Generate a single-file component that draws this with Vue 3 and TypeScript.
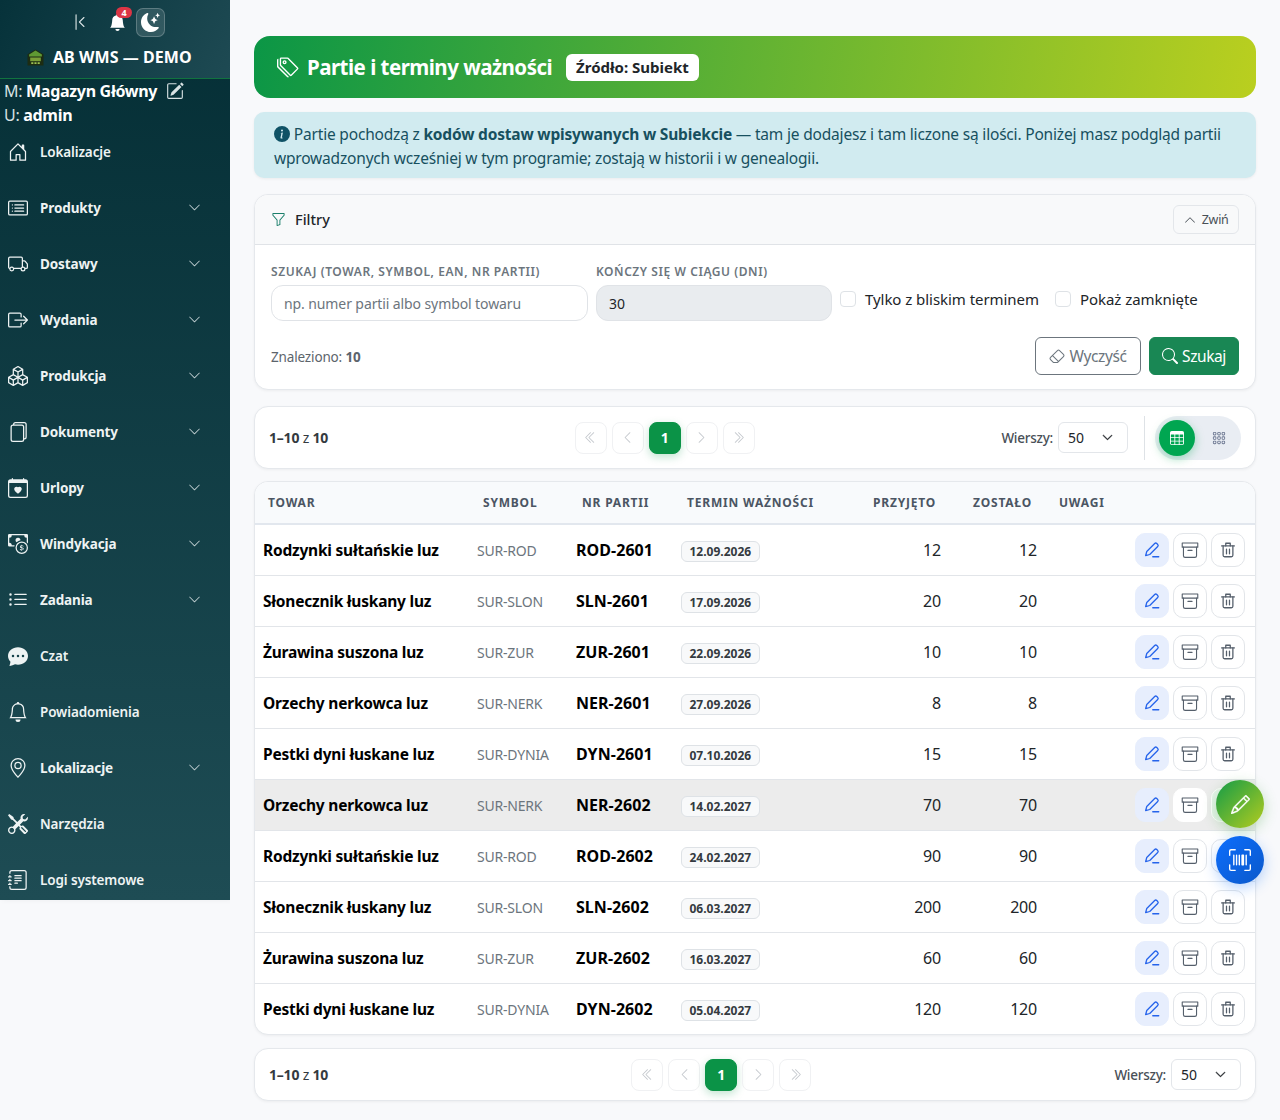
<template>
  <div class="layout">
    <aside class="sidebar">
      <header class="brand">
        <div class="brand-tools">
          <svg class="ic collapse" viewBox="0 0 16 16"><path :d="icons.collapse" /></svg>
          <span class="bell">
            <svg class="ic" viewBox="0 0 16 16"><path :d="icons.bellFill" /></svg>
            <span class="bell-badge">4</span>
          </span>
          <span class="theme-btn">
            <svg class="ic" viewBox="0 0 16 16"><path :d="icons.moon" /></svg>
          </span>
        </div>
        <div class="brand-name">
          <svg class="logo" viewBox="0 0 16 16">
            <path d="M8 .5 15.500 5v10.500H.5V5z" fill="#1d2c12" />
            <path d="M8 1.500 14 5.200V7H2V5.200z" fill="#5f9a33" />
            <path d="M3 8h10v3.500H3z" fill="#7a9f38" />
            <path d="M4 12.500h2v1.500H4zM7 12.500h2v1.500H7zM10 12.500h2v1.500h-2z" fill="#9cc052" />
          </svg>
          <span>AB WMS — DEMO</span>
        </div>
      </header>
      <div class="user-info">
        <div>M: <b>Magazyn Główny</b><svg class="ic edit" viewBox="0 0 16 16"><path :d="icons.pencilSquare" /></svg></div>
        <div>U: <b>admin</b></div>
      </div>
      <nav class="nav">
        <a v-for="item in navItems" :key="item.label + item.icon" class="nav-item" :class="{ strong: item.sub }">
          <svg class="ic nav-icon" viewBox="0 0 16 16"><path :d="icons[item.icon]" /></svg>
          <span class="nav-label">{{ item.label }}</span>
          <svg v-if="item.sub" class="ic nav-caret" viewBox="0 0 16 16"><path :d="icons.chevronDown" /></svg>
        </a>
      </nav>
    </aside>

    <main class="main">
      <section class="hero">
        <svg class="ic hero-icon" viewBox="0 0 16 16"><path :d="icons.tags" /></svg>
        <h1>Partie i terminy ważności</h1>
        <span class="hero-badge">Źródło: Subiekt</span>
      </section>

      <section class="info">
        <svg class="ic info-icon" viewBox="0 0 16 16"><path :d="icons.info" /></svg>
        Partie pochodzą z <b>kodów dostaw wpisywanych w Subiekcie</b> — tam je dodajesz i tam liczone są ilości. Poniżej masz podgląd partii wprowadzonych wcześniej w tym programie; zostają w historii i w genealogii.
      </section>

      <section class="card filters">
        <div class="filters-head">
          <svg class="ic funnel" viewBox="0 0 16 16"><path :d="icons.funnel" /></svg>
          <span class="filters-title">Filtry</span>
          <button class="collapse-btn">
            <svg class="ic" viewBox="0 0 16 16"><path :d="icons.chevronUp" /></svg>
            Zwiń
          </button>
        </div>
        <div class="filters-body">
          <div class="filters-row">
            <label class="field search-field">
              <span class="field-label">Szukaj (towar, symbol, EAN, nr partii)</span>
              <input class="input" placeholder="np. numer partii albo symbol towaru" />
            </label>
            <label class="field days-field">
              <span class="field-label">Kończy się w ciągu (dni)</span>
              <input class="input disabled" value="30" />
            </label>
            <label class="check"><span class="box"></span>Tylko z bliskim terminem</label>
            <label class="check"><span class="box"></span>Pokaż zamknięte</label>
          </div>
          <div class="filters-foot">
            <span class="found">Znaleziono: <b>10</b></span>
            <div class="foot-btns">
              <button class="btn btn-clear">
                <svg class="ic" viewBox="0 0 16 16"><path :d="icons.eraser" /></svg>
                Wyczyść
              </button>
              <button class="btn btn-search">
                <svg class="ic" viewBox="0 0 16 16"><path :d="icons.search" /></svg>
                Szukaj
              </button>
            </div>
          </div>
        </div>
      </section>

      <section class="card pager top">
        <span class="range"><b>1–10</b> z <b>10</b></span>
        <div class="pages">
          <span v-for="p in pageBtns" :key="p.key" class="page" :class="{ active: p.active }">
            <template v-if="p.active">1</template>
            <svg v-else class="ic" viewBox="0 0 16 16"><path :d="icons[p.key]" /></svg>
          </span>
        </div>
        <div class="pager-right">
          <span class="rows-label">Wierszy:</span>
          <span class="rows-select">50<svg class="ic" viewBox="0 0 16 16"><path :d="icons.chevronDown" /></svg></span>
          <span class="divider"></span>
          <span class="view-toggle">
            <span class="view-btn on"><svg class="ic" viewBox="0 0 16 16"><path :d="icons.table" /></svg></span>
            <span class="view-btn"><svg class="ic" viewBox="0 0 16 16"><path :d="icons.grid" /></svg></span>
          </span>
        </div>
      </section>

      <section class="card table-card">
        <table>
          <colgroup>
            <col style="width: 214px" />
            <col style="width: 99px" />
            <col style="width: 105px" />
            <col style="width: 186px" />
            <col style="width: 90px" />
            <col style="width: 96px" />
            <col style="width: 85px" />
            <col />
          </colgroup>
          <thead>
            <tr>
              <th>Towar</th>
              <th>Symbol</th>
              <th>Nr partii</th>
              <th>Termin ważności</th>
              <th class="num">Przyjęto</th>
              <th class="num">Zostało</th>
              <th>Uwagi</th>
              <th></th>
            </tr>
          </thead>
          <tbody>
            <tr v-for="(row, i) in rows" :key="row.batch" :class="{ hovered: i === 5 }">
              <td class="name">{{ row.name }}</td>
              <td class="symbol">{{ row.symbol }}</td>
              <td class="batch">{{ row.batch }}</td>
              <td><span class="date">{{ row.date }}</span></td>
              <td class="num">{{ row.qty }}</td>
              <td class="num">{{ row.qty }}</td>
              <td></td>
              <td class="actions-cell">
                <div class="actions">
                  <button class="act edit-act">
                    <svg class="stroke" viewBox="0 0 24 24">
                      <path d="M3.500 19.500 5 14 15.600 3.400a2 2 0 0 1 2.800 0l1.200 1.200a2 2 0 0 1 0 2.800L9 18z" />
                      <path d="M13 21h8" />
                    </svg>
                  </button>
                  <button class="act">
                    <svg class="stroke thin" viewBox="1 1 22 22">
                      <path d="M2.500 3.500h19v5h-19z" />
                      <path d="M4 8.500V19a2 2 0 0 0 2 2h12a2 2 0 0 0 2-2V8.500" />
                      <path d="M9.500 12.500h5" />
                    </svg>
                  </button>
                  <button class="act trash-act">
                    <svg class="stroke" viewBox="0 0 24 24">
                      <path d="M3.500 6.500h17" />
                      <path d="M9 6.500V3h6v3.500" />
                      <path d="M5.500 6.500V19a2 2 0 0 0 2 2h9a2 2 0 0 0 2-2V6.500" />
                      <path d="M10 11v6M14 11v6" />
                    </svg>
                  </button>
                </div>
              </td>
            </tr>
          </tbody>
        </table>
      </section>

      <section class="card pager bottom">
        <span class="range"><b>1–10</b> z <b>10</b></span>
        <div class="pages">
          <span v-for="p in pageBtns" :key="p.key" class="page" :class="{ active: p.active }">
            <template v-if="p.active">1</template>
            <svg v-else class="ic" viewBox="0 0 16 16"><path :d="icons[p.key]" /></svg>
          </span>
        </div>
        <div class="pager-right">
          <span class="rows-label">Wierszy:</span>
          <span class="rows-select">50<svg class="ic" viewBox="0 0 16 16"><path :d="icons.chevronDown" /></svg></span>
        </div>
      </section>
    </main>

    <button class="fab fab-green"><svg class="ic" viewBox="0 0 16 16"><path :d="icons.pencil" /></svg></button>
    <button class="fab fab-blue"><svg class="ic" viewBox="0 0 16 16"><path :d="icons.upc" /></svg></button>
  </div>
</template>

<script setup lang="ts">
const icons: Record<string, string> = {
  collapse: 'M11.854 3.646a.5.5 0 0 1 0 .708L8.207 8l3.647 3.646a.5.5 0 0 1-.708.708l-4-4a.5.5 0 0 1 0-.708l4-4a.5.5 0 0 1 .708 0zM4.5 1a.5.5 0 0 0-.5.5v13a.5.5 0 0 0 1 0v-13a.5.5 0 0 0-.5-.5z',
  bellFill: 'M8 16a2 2 0 0 0 2-2H6a2 2 0 0 0 2 2zm.995-14.901a1 1 0 1 0-1.99 0A5.002 5.002 0 0 0 3 6c0 1.098-.5 6-2 7h14c-1.5-1-2-5.902-2-7 0-2.42-1.72-4.44-4.005-4.901z',
  moon: 'M6 .278a.768.768 0 0 1 .08.858 7.208 7.208 0 0 0-.878 3.46c0 4.021 3.278 7.277 7.318 7.277.527 0 1.04-.055 1.533-.16a.787.787 0 0 1 .81.316.733.733 0 0 1-.031.893A8.349 8.349 0 0 1 8.344 16C3.734 16 0 12.286 0 7.71 0 4.266 2.114 1.312 5.124.06A.752.752 0 0 1 6 .278z M10.794 3.148a.217.217 0 0 1 .412 0l.387 1.162c.173.518.579.924 1.097 1.097l1.162.387a.217.217 0 0 1 0 .412l-1.162.387a1.734 1.734 0 0 0-1.097 1.097l-.387 1.162a.217.217 0 0 1-.412 0l-.387-1.162A1.734 1.734 0 0 0 9.31 6.593l-1.162-.387a.217.217 0 0 1 0-.412l1.162-.387a1.734 1.734 0 0 0 1.097-1.097l.387-1.162zM13.863.099a.145.145 0 0 1 .274 0l.258.774c.115.346.386.617.732.732l.774.258a.145.145 0 0 1 0 .274l-.774.258a1.156 1.156 0 0 0-.732.732l-.258.774a.145.145 0 0 1-.274 0l-.258-.774a1.156 1.156 0 0 0-.732-.732l-.774-.258a.145.145 0 0 1 0-.274l.774-.258c.346-.115.617-.386.732-.732L13.863.1z',
  pencilSquare: 'M15.502 1.94a.5.5 0 0 1 0 .706L14.459 3.69l-2-2L13.502.646a.5.5 0 0 1 .707 0l1.293 1.293zm-1.75 2.456-2-2L4.939 9.21a.5.5 0 0 0-.121.196l-.805 2.414a.25.25 0 0 0 .316.316l2.414-.805a.5.5 0 0 0 .196-.12l6.813-6.814z M1 13.5A1.5 1.5 0 0 0 2.5 15h11a1.5 1.5 0 0 0 1.5-1.5v-6a.5.5 0 0 0-1 0v6a.5.5 0 0 1-.5.5h-11a.5.5 0 0 1-.5-.5v-11a.5.5 0 0 1 .5-.5H9a.5.5 0 0 0 0-1H2.5A1.5 1.5 0 0 0 1 2.5v11z',
  chevronDown: 'M1.646 4.646a.5.5 0 0 1 .708 0L8 10.293l5.646-5.647a.5.5 0 0 1 .708.708l-6 6a.5.5 0 0 1-.708 0l-6-6a.5.5 0 0 1 0-.708z',
  chevronUp: 'M7.646 4.646a.5.5 0 0 1 .708 0l6 6a.5.5 0 0 1-.708.708L8 5.707l-5.646 5.647a.5.5 0 0 1-.708-.708l6-6z',
  first: 'M8.354 1.646a.5.5 0 0 1 0 .708L2.707 8l5.647 5.646a.5.5 0 0 1-.708.708l-6-6a.5.5 0 0 1 0-.708l6-6a.5.5 0 0 1 .708 0z M12.354 1.646a.5.5 0 0 1 0 .708L6.707 8l5.647 5.646a.5.5 0 0 1-.708.708l-6-6a.5.5 0 0 1 0-.708l6-6a.5.5 0 0 1 .708 0z',
  prev: 'M11.354 1.646a.5.5 0 0 1 0 .708L5.707 8l5.647 5.646a.5.5 0 0 1-.708.708l-6-6a.5.5 0 0 1 0-.708l6-6a.5.5 0 0 1 .708 0z',
  next: 'M4.646 1.646a.5.5 0 0 1 .708 0l6 6a.5.5 0 0 1 0 .708l-6 6a.5.5 0 0 1-.708-.708L10.293 8 4.646 2.354a.5.5 0 0 1 0-.708z',
  last: 'M3.646 1.646a.5.5 0 0 1 .708 0l6 6a.5.5 0 0 1 0 .708l-6 6a.5.5 0 0 1-.708-.708L9.293 8 3.646 2.354a.5.5 0 0 1 0-.708z M7.646 1.646a.5.5 0 0 1 .708 0l6 6a.5.5 0 0 1 0 .708l-6 6a.5.5 0 0 1-.708-.708L13.293 8 7.646 2.354a.5.5 0 0 1 0-.708z',
  house: 'M8.354 1.146a.5.5 0 0 0-.708 0l-6 6A.5.5 0 0 0 1.5 7.5v7a.5.5 0 0 0 .5.5h4.5a.5.5 0 0 0 .5-.5v-4h2v4a.5.5 0 0 0 .5.5H14a.5.5 0 0 0 .5-.5v-7a.5.5 0 0 0-.146-.354L13 5.793V2.5a.5.5 0 0 0-.5-.5h-1a.5.5 0 0 0-.5.5v1.293L8.354 1.146zM2.5 14V7.707l5.5-5.5 5.5 5.5V14H10v-4a.5.5 0 0 0-.5-.5h-3a.5.5 0 0 0-.5.5v4H2.5z',
  cardList: 'M14.5 3a.5.5 0 0 1 .5.5v9a.5.5 0 0 1-.5.5h-13a.5.5 0 0 1-.5-.5v-9a.5.5 0 0 1 .5-.5h13zm-13-1A1.5 1.5 0 0 0 0 3.5v9A1.5 1.5 0 0 0 1.5 14h13a1.5 1.5 0 0 0 1.5-1.5v-9A1.5 1.5 0 0 0 14.5 2h-13z M5 8a.5.5 0 0 1 .5-.5h7a.5.5 0 0 1 0 1h-7A.5.5 0 0 1 5 8zm0-2.5a.5.5 0 0 1 .5-.5h7a.5.5 0 0 1 0 1h-7a.5.5 0 0 1-.5-.5zm0 5a.5.5 0 0 1 .5-.5h7a.5.5 0 0 1 0 1h-7a.5.5 0 0 1-.5-.5zm-1-5a.5.5 0 1 1-1 0 .5.5 0 0 1 1 0zM4 8a.5.5 0 1 1-1 0 .5.5 0 0 1 1 0zm0 2.5a.5.5 0 1 1-1 0 .5.5 0 0 1 1 0z',
  truck: 'M0 3.5A1.5 1.5 0 0 1 1.5 2h9A1.5 1.5 0 0 1 12 3.5V5h1.02a1.5 1.5 0 0 1 1.17.563l1.481 1.85a1.5 1.5 0 0 1 .329.938V10.5a1.5 1.5 0 0 1-1.5 1.5H14a2 2 0 1 1-4 0H5a2 2 0 1 1-3.998-.085A1.5 1.5 0 0 1 0 10.5v-7zm1.294 7.456A1.999 1.999 0 0 1 4.732 11h5.536a2.01 2.01 0 0 1 .732-.732V3.5a.5.5 0 0 0-.5-.5h-9a.5.5 0 0 0-.5.5v7a.5.5 0 0 0 .294.456zM12 10a2 2 0 0 1 1.732 1h.768a.5.5 0 0 0 .5-.5V8.35a.5.5 0 0 0-.11-.312l-1.48-1.85A.5.5 0 0 0 13.02 6H12v4zm-9 1a1 1 0 1 0 0 2 1 1 0 0 0 0-2zm9 0a1 1 0 1 0 0 2 1 1 0 0 0 0-2z',
  boxArrow: 'M10 12.5a.5.5 0 0 1-.5.5h-8a.5.5 0 0 1-.5-.5v-9a.5.5 0 0 1 .5-.5h8a.5.5 0 0 1 .5.5v2a.5.5 0 0 0 1 0v-2A1.5 1.5 0 0 0 9.5 2h-8A1.5 1.5 0 0 0 0 3.5v9A1.5 1.5 0 0 0 1.5 14h8a1.5 1.5 0 0 0 1.5-1.5v-2a.5.5 0 0 0-1 0v2z M15.854 8.354a.5.5 0 0 0 0-.708l-3-3a.5.5 0 0 0-.708.708L14.293 7.5H5.5a.5.5 0 0 0 0 1h8.793l-2.147 2.146a.5.5 0 0 0 .708.708l3-3z',
  boxes: 'M7.752.066a.5.5 0 0 1 .496 0l3.75 2.143a.5.5 0 0 1 .252.434v3.995l3.498 2A.5.5 0 0 1 16 9.07v4.286a.5.5 0 0 1-.252.434l-3.75 2.143a.5.5 0 0 1-.496 0l-3.502-2-3.502 2.001a.5.5 0 0 1-.496 0l-3.75-2.143A.5.5 0 0 1 0 13.357V9.071a.5.5 0 0 1 .252-.434L3.75 6.638V2.643a.5.5 0 0 1 .252-.434L7.752.066ZM4.25 7.504 1.508 9.071l2.742 1.567 2.742-1.567L4.25 7.504ZM7.5 9.933l-2.75 1.571v3.134l2.75-1.571V9.933Zm1 3.134 2.75 1.571v-3.134L8.5 9.933v3.134Zm.508-3.996 2.742 1.567 2.742-1.567-2.742-1.567-2.742 1.567Zm2.242-2.433V3.504L8.5 5.076V8.21l2.75-1.572ZM7.5 8.21V5.076L4.75 3.504v3.134L7.5 8.21ZM5.258 2.643 8 4.21l2.742-1.567L8 1.076 5.258 2.643ZM15 9.933l-2.75 1.571v3.134L15 13.067V9.933ZM3.75 14.638v-3.134L1 9.933v3.134l2.75 1.571Z',
  files: 'M13 0H6a2 2 0 0 0-2 2 2 2 0 0 0-2 2v10a2 2 0 0 0 2 2h7a2 2 0 0 0 2-2 2 2 0 0 0 2-2V2a2 2 0 0 0-2-2zm0 13V4a2 2 0 0 0-2-2H5a1 1 0 0 1 1-1h7a1 1 0 0 1 1 1v10a1 1 0 0 1-1 1zM3 4a1 1 0 0 1 1-1h7a1 1 0 0 1 1 1v10a1 1 0 0 1-1 1H4a1 1 0 0 1-1-1V4z',
  calendar: 'M4 .5a.5.5 0 0 0-1 0V1H2a2 2 0 0 0-2 2v11a2 2 0 0 0 2 2h12a2 2 0 0 0 2-2V3a2 2 0 0 0-2-2h-1V.5a.5.5 0 0 0-1 0V1H4V.5ZM1 14V4h14v10a1 1 0 0 1-1 1H2a1 1 0 0 1-1-1Zm7-6.507c1.664-1.711 5.825 1.283 0 5.132-5.825-3.85-1.664-6.843 0-5.132Z',
  cash: 'M11 15a4 4 0 1 0 0-8 4 4 0 0 0 0 8zm5-4a5 5 0 1 1-10 0 5 5 0 0 1 10 0z M9.438 11.944c.047.596.518 1.06 1.363 1.116v.44h.375v-.443c.875-.061 1.386-.529 1.386-1.207 0-.618-.39-.936-1.09-1.1l-.296-.07v-1.2c.376.043.614.248.671.532h.658c-.047-.575-.54-1.024-1.329-1.073V8.5h-.375v.45c-.747.073-1.255.522-1.255 1.158 0 .562.378.92 1.007 1.066l.248.061v1.272c-.384-.058-.639-.27-.696-.563h-.668zm1.36-1.354c-.369-.085-.569-.26-.569-.522 0-.294.216-.514.572-.578v1.1h-.003zm.432.746c.449.104.655.272.655.569 0 .339-.257.571-.709.635v-1.195l.054.012z M1 0a1 1 0 0 0-1 1v8a1 1 0 0 0 1 1h4.083c.058-.344.145-.678.258-1H3a2 2 0 0 0-2-2V3a2 2 0 0 0 2-2h10a2 2 0 0 0 2 2v3.528c.38.34.717.728 1 1.154V1a1 1 0 0 0-1-1H1z M9.998 5.083 10 5a2 2 0 1 0-3.132 1.65 5.982 5.982 0 0 1 3.13-1.567z',
  list: 'M5 11.5a.5.5 0 0 1 .5-.5h9a.5.5 0 0 1 0 1h-9a.5.5 0 0 1-.5-.5zm0-4a.5.5 0 0 1 .5-.5h9a.5.5 0 0 1 0 1h-9a.5.5 0 0 1-.5-.5zm0-4a.5.5 0 0 1 .5-.5h9a.5.5 0 0 1 0 1h-9a.5.5 0 0 1-.5-.5zm-3 1a1 1 0 1 0 0-2 1 1 0 0 0 0 2zm0 4a1 1 0 1 0 0-2 1 1 0 0 0 0 2zm0 4a1 1 0 1 0 0-2 1 1 0 0 0 0 2z',
  chat: 'M16 8c0 3.866-3.582 7-8 7a9.06 9.06 0 0 1-2.347-.306c-.584.296-1.925.864-4.181 1.234-.2.032-.352-.176-.273-.362.354-.836.674-1.95.77-2.966C.744 11.37 0 9.76 0 8c0-3.866 3.582-7 8-7s8 3.134 8 7zM5 8a1 1 0 1 0-2 0 1 1 0 0 0 2 0zm4 0a1 1 0 1 0-2 0 1 1 0 0 0 2 0zm3 1a1 1 0 1 0 0-2 1 1 0 0 0 0 2z',
  bell: 'M8 16a2 2 0 0 0 2-2H6a2 2 0 0 0 2 2zM8 1.918l-.797.161A4.002 4.002 0 0 0 4 6c0 .628-.134 2.197-.459 3.742-.16.767-.376 1.566-.663 2.258h10.244c-.287-.692-.502-1.49-.663-2.258C12.134 8.197 12 6.628 12 6a4.002 4.002 0 0 0-3.203-3.92L8 1.917zM14.22 12c.223.447.481.801.78 1H1c.299-.199.557-.553.78-1C2.68 10.2 3 6.88 3 6c0-2.42 1.72-4.44 4.005-4.901a1 1 0 1 1 1.99 0A5.002 5.002 0 0 1 13 6c0 .88.32 4.2 1.22 6z',
  geo: 'M12.166 8.94c-.524 1.062-1.234 2.12-1.96 3.07A31.493 31.493 0 0 1 8 14.58a31.481 31.481 0 0 1-2.206-2.57c-.726-.95-1.436-2.008-1.96-3.07C3.304 7.867 3 6.862 3 6a5 5 0 0 1 10 0c0 .862-.305 1.867-.834 2.94zM8 16s6-5.686 6-10A6 6 0 0 0 2 6c0 4.314 6 10 6 10z M8 8a2 2 0 1 1 0-4 2 2 0 0 1 0 4zm0 1a3 3 0 1 0 0-6 3 3 0 0 0 0 6z',
  tools: 'M1 0 0 1l2.2 3.081a1 1 0 0 0 .815.419h.07a1 1 0 0 1 .708.293l2.675 2.675-2.617 2.654A3.003 3.003 0 0 0 0 13a3 3 0 1 0 5.878-.851l2.654-2.617.968.968-.305.914a1 1 0 0 0 .242 1.023l3.27 3.27a.997.997 0 0 0 1.414 0l1.586-1.586a.997.997 0 0 0 0-1.414l-3.27-3.27a1 1 0 0 0-1.023-.242L10.5 9.5l-.96-.96 2.68-2.643A3.005 3.005 0 0 0 16 3c0-.269-.035-.53-.102-.777l-2.14 2.141L12 4l-.364-1.757L13.777.102a3 3 0 0 0-3.675 3.68L7.462 6.46 4.793 3.793a1 1 0 0 1-.293-.707v-.071a1 1 0 0 0-.419-.814L1 0Zm9.646 10.646a.5.5 0 0 1 .708 0l2.914 2.915a.5.5 0 0 1-.707.707l-2.915-2.914a.5.5 0 0 1 0-.708ZM3 11l.471.242.529.026.287.445.445.287.026.529L5 13l-.242.471-.026.529-.445.287-.287.445-.529.026L3 15l-.471-.242L2 14.732l-.287-.445L1.268 14l-.026-.529L1 13l.242-.471.026-.529.445-.287.287-.445.529-.026L3 11Z',
  journal: 'M5 10.5a.5.5 0 0 1 .5-.5h2a.5.5 0 0 1 0 1h-2a.5.5 0 0 1-.5-.5zm0-2a.5.5 0 0 1 .5-.5h5a.5.5 0 0 1 0 1h-5a.5.5 0 0 1-.5-.5zm0-2a.5.5 0 0 1 .5-.5h5a.5.5 0 0 1 0 1h-5a.5.5 0 0 1-.5-.5zm0-2a.5.5 0 0 1 .5-.5h5a.5.5 0 0 1 0 1h-5a.5.5 0 0 1-.5-.5z M3 0h10a2 2 0 0 1 2 2v12a2 2 0 0 1-2 2H3a2 2 0 0 1-2-2v-1h1v1a1 1 0 0 0 1 1h10a1 1 0 0 0 1-1V2a1 1 0 0 0-1-1H3a1 1 0 0 0-1 1v1H1V2a2 2 0 0 1 2-2z M1 5v-.5a.5.5 0 0 1 1 0V5h.5a.5.5 0 0 1 0 1h-2a.5.5 0 0 1 0-1H1zm0 3v-.5a.5.5 0 0 1 1 0V8h.5a.5.5 0 0 1 0 1h-2a.5.5 0 0 1 0-1H1zm0 3v-.5a.5.5 0 0 1 1 0v.5h.5a.5.5 0 0 1 0 1h-2a.5.5 0 0 1 0-1H1z',
  tags: 'M3 2v4.586l7 7L14.586 9l-7-7H3zM2 2a1 1 0 0 1 1-1h4.586a1 1 0 0 1 .707.293l7 7a1 1 0 0 1 0 1.414l-4.586 4.586a1 1 0 0 1-1.414 0l-7-7A1 1 0 0 1 2 6.586V2z M5.5 5a.5.5 0 1 1 0-1 .5.5 0 0 1 0 1zm0 1a1.5 1.5 0 1 0 0-3 1.5 1.5 0 0 0 0 3zM1 7.086a1 1 0 0 0 .293.707L8.75 15.25l-.043.043a1 1 0 0 1-1.414 0l-7-7A1 1 0 0 1 0 7.586V3a1 1 0 0 1 1-1v5.086z',
  info: 'M8 16A8 8 0 1 0 8 0a8 8 0 0 0 0 16zm.93-9.412-1 4.705c-.07.34.029.533.304.533.194 0 .487-.07.686-.246l-.088.416c-.287.346-.92.598-1.465.598-.703 0-1.002-.422-.808-1.319l.738-3.468c.064-.293.006-.399-.287-.47l-.451-.081.082-.381 2.29-.287zM8 5.5a1 1 0 1 1 0-2 1 1 0 0 1 0 2z',
  funnel: 'M1.5 1.5A.5.5 0 0 1 2 1h12a.5.5 0 0 1 .5.5v2a.5.5 0 0 1-.128.334L10 8.692V13.5a.5.5 0 0 1-.342.474l-3 1A.5.5 0 0 1 6 14.5V8.692L1.628 3.834A.5.5 0 0 1 1.5 3.5v-2zm1 .5v1.308l4.372 4.858A.5.5 0 0 1 7 8.5v5.306l2-.666V8.5a.5.5 0 0 1 .128-.334L13.5 3.308V2h-11z',
  eraser: 'M8.086 2.207a2 2 0 0 1 2.828 0l3.879 3.879a2 2 0 0 1 0 2.828l-5.5 5.5A2 2 0 0 1 7.879 15H5.12a2 2 0 0 1-1.414-.586l-2.5-2.5a2 2 0 0 1 0-2.828l6.879-6.879zm2.121.707a1 1 0 0 0-1.414 0L4.16 7.547l5.293 5.293 4.633-4.633a1 1 0 0 0 0-1.414l-3.879-3.879zM8.746 13.547 3.453 8.254 1.914 9.793a1 1 0 0 0 0 1.414l2.5 2.5a1 1 0 0 0 .707.293H7.88a1 1 0 0 0 .707-.293l.16-.16z',
  search: 'M11.742 10.344a6.5 6.5 0 1 0-1.397 1.398h-.001c.03.04.062.078.098.115l3.85 3.85a1 1 0 0 0 1.415-1.414l-3.85-3.85a1.007 1.007 0 0 0-.115-.1zM12 6.5a5.5 5.5 0 1 1-11 0 5.5 5.5 0 0 1 11 0z',
  table: 'M0 2a2 2 0 0 1 2-2h12a2 2 0 0 1 2 2v12a2 2 0 0 1-2 2H2a2 2 0 0 1-2-2V2zm15 2h-4v3h4V4zm0 4h-4v3h4V8zm0 4h-4v3h3a1 1 0 0 0 1-1v-2zm-5 3v-3H6v3h4zm-5 0v-3H1v2a1 1 0 0 0 1 1h3zm-4-4h4V8H1v3zm0-4h4V4H1v3zm5-3v3h4V4H6zm4 4H6v3h4V8z',
  grid: 'M1 2.5A1.5 1.5 0 0 1 2.5 1h1A1.5 1.5 0 0 1 5 2.5v1A1.5 1.5 0 0 1 3.5 5h-1A1.5 1.5 0 0 1 1 3.5v-1zM2.5 2a.5.5 0 0 0-.5.5v1a.5.5 0 0 0 .5.5h1a.5.5 0 0 0 .5-.5v-1a.5.5 0 0 0-.5-.5h-1zm3.5.5A1.5 1.5 0 0 1 7.500 1h1A1.500 1.500 0 0 1 10 2.500v1A1.500 1.500 0 0 1 8.500 5h-1A1.500 1.500 0 0 1 6 3.500v-1zM7.500 2a.5.5 0 0 0-.5.5v1a.5.5 0 0 0 .5.5h1a.5.5 0 0 0 .5-.5v-1a.5.5 0 0 0-.5-.5h-1zM11 2.500A1.500 1.500 0 0 1 12.500 1h1A1.500 1.500 0 0 1 15 2.500v1A1.500 1.500 0 0 1 13.500 5h-1A1.500 1.500 0 0 1 11 3.500v-1zm1.500-.5a.5.5 0 0 0-.5.5v1a.5.5 0 0 0 .5.5h1a.5.5 0 0 0 .5-.5v-1a.5.5 0 0 0-.5-.5h-1zM1 7.500A1.500 1.500 0 0 1 2.500 6h1A1.500 1.500 0 0 1 5 7.500v1A1.500 1.500 0 0 1 3.500 10h-1A1.500 1.500 0 0 1 1 8.500v-1zM2.500 7a.5.5 0 0 0-.5.5v1a.5.5 0 0 0 .5.5h1a.5.5 0 0 0 .5-.5v-1a.5.5 0 0 0-.5-.5h-1zM6 7.500A1.500 1.500 0 0 1 7.500 6h1A1.500 1.500 0 0 1 10 7.500v1A1.500 1.500 0 0 1 8.500 10h-1A1.500 1.500 0 0 1 6 8.500v-1zM7.500 7a.5.5 0 0 0-.5.5v1a.5.5 0 0 0 .5.5h1a.5.5 0 0 0 .5-.5v-1a.5.5 0 0 0-.5-.5h-1zM11 7.500A1.500 1.500 0 0 1 12.500 6h1A1.500 1.500 0 0 1 15 7.500v1A1.500 1.500 0 0 1 13.500 10h-1A1.500 1.500 0 0 1 11 8.500v-1zm1.500-.5a.5.5 0 0 0-.5.5v1a.5.5 0 0 0 .5.5h1a.5.5 0 0 0 .5-.5v-1a.5.5 0 0 0-.5-.5h-1zM1 12.500A1.500 1.500 0 0 1 2.500 11h1A1.500 1.500 0 0 1 5 12.500v1A1.500 1.500 0 0 1 3.500 15h-1A1.500 1.500 0 0 1 1 13.500v-1zm1.500-.5a.5.5 0 0 0-.5.5v1a.5.5 0 0 0 .5.5h1a.5.5 0 0 0 .5-.5v-1a.5.5 0 0 0-.5-.5h-1zM6 12.500A1.500 1.500 0 0 1 7.500 11h1A1.500 1.500 0 0 1 10 12.500v1A1.500 1.500 0 0 1 8.500 15h-1A1.500 1.500 0 0 1 6 13.500v-1zm1.500-.5a.5.5 0 0 0-.5.5v1a.5.5 0 0 0 .5.5h1a.5.5 0 0 0 .5-.5v-1a.5.5 0 0 0-.5-.5h-1zM11 12.500A1.500 1.500 0 0 1 12.500 11h1A1.500 1.500 0 0 1 15 12.500v1A1.500 1.500 0 0 1 13.500 15h-1A1.500 1.500 0 0 1 11 13.500v-1zm1.500-.5a.5.5 0 0 0-.5.5v1a.5.5 0 0 0 .5.5h1a.5.5 0 0 0 .5-.5v-1a.5.5 0 0 0-.5-.5h-1z',
  pencil: 'M12.146.146a.5.5 0 0 1 .708 0l3 3a.5.5 0 0 1 0 .708l-10 10a.5.5 0 0 1-.168.11l-5 2a.5.5 0 0 1-.65-.65l2-5a.5.5 0 0 1 .11-.168l10-10zM11.207 2.500 13.500 4.793 14.793 3.500 12.500 1.207 11.207 2.500zm1.586 3L10.500 3.207 4 9.707V10h.5a.5.5 0 0 1 .5.5v.5h.5a.5.5 0 0 1 .5.5v.5h.293l6.500-6.500zm-9.761 5.175-.106.106-1.528 3.821 3.821-1.528.106-.106A.5.5 0 0 1 5 12.500V12h-.5a.5.5 0 0 1-.5-.5V11h-.5a.5.5 0 0 1-.468-.325z',
  upc: 'M1.5 1a.5.5 0 0 0-.5.5v3a.5.5 0 0 1-1 0v-3A1.5 1.5 0 0 1 1.5 0h3a.5.5 0 0 1 0 1h-3zM11 .5a.5.5 0 0 1 .5-.5h3A1.5 1.5 0 0 1 16 1.500v3a.5.5 0 0 1-1 0v-3a.5.5 0 0 0-.5-.5h-3a.5.5 0 0 1-.5-.5zM.5 11a.5.5 0 0 1 .5.5v3a.5.5 0 0 0 .5.5h3a.5.5 0 0 1 0 1h-3A1.500 1.500 0 0 1 0 14.500v-3a.5.5 0 0 1 .5-.5zm15 0a.5.5 0 0 1 .5.5v3a1.500 1.500 0 0 1-1.500 1.500h-3a.5.5 0 0 1 0-1h3a.5.5 0 0 0 .5-.5v-3a.5.5 0 0 1 .5-.5zM3 4.500a.5.5 0 0 1 1 0v7a.5.5 0 0 1-1 0v-7zm2 0a.5.5 0 0 1 1 0v7a.5.5 0 0 1-1 0v-7zm2 0a.5.5 0 0 1 1 0v7a.5.5 0 0 1-1 0v-7zm2 0a.5.5 0 0 1 .5-.5h1a.5.5 0 0 1 .5.5v7a.5.5 0 0 1-.5.5h-1a.5.5 0 0 1-.5-.5v-7zm3 0a.5.5 0 0 1 1 0v7a.5.5 0 0 1-1 0v-7z',
}

const navItems = [
  { label: 'Lokalizacje', icon: 'house', sub: false },
  { label: 'Produkty', icon: 'cardList', sub: true },
  { label: 'Dostawy', icon: 'truck', sub: true },
  { label: 'Wydania', icon: 'boxArrow', sub: true },
  { label: 'Produkcja', icon: 'boxes', sub: true },
  { label: 'Dokumenty', icon: 'files', sub: true },
  { label: 'Urlopy', icon: 'calendar', sub: true },
  { label: 'Windykacja', icon: 'cash', sub: true },
  { label: 'Zadania', icon: 'list', sub: true },
  { label: 'Czat', icon: 'chat', sub: false },
  { label: 'Powiadomienia', icon: 'bell', sub: false },
  { label: 'Lokalizacje', icon: 'geo', sub: true },
  { label: 'Narzędzia', icon: 'tools', sub: false },
  { label: 'Logi systemowe', icon: 'journal', sub: false },
]

const pageBtns = [
  { key: 'first', active: false },
  { key: 'prev', active: false },
  { key: 'current', active: true },
  { key: 'next', active: false },
  { key: 'last', active: false },
]

const rows = [
  { name: 'Rodzynki sułtańskie luz', symbol: 'SUR-ROD', batch: 'ROD-2601', date: '12.09.2026', qty: 12 },
  { name: 'Słonecznik łuskany luz', symbol: 'SUR-SLON', batch: 'SLN-2601', date: '17.09.2026', qty: 20 },
  { name: 'Żurawina suszona luz', symbol: 'SUR-ZUR', batch: 'ZUR-2601', date: '22.09.2026', qty: 10 },
  { name: 'Orzechy nerkowca luz', symbol: 'SUR-NERK', batch: 'NER-2601', date: '27.09.2026', qty: 8 },
  { name: 'Pestki dyni łuskane luz', symbol: 'SUR-DYNIA', batch: 'DYN-2601', date: '07.10.2026', qty: 15 },
  { name: 'Orzechy nerkowca luz', symbol: 'SUR-NERK', batch: 'NER-2602', date: '14.02.2027', qty: 70 },
  { name: 'Rodzynki sułtańskie luz', symbol: 'SUR-ROD', batch: 'ROD-2602', date: '24.02.2027', qty: 90 },
  { name: 'Słonecznik łuskany luz', symbol: 'SUR-SLON', batch: 'SLN-2602', date: '06.03.2027', qty: 200 },
  { name: 'Żurawina suszona luz', symbol: 'SUR-ZUR', batch: 'ZUR-2602', date: '16.03.2027', qty: 60 },
  { name: 'Pestki dyni łuskane luz', symbol: 'SUR-DYNIA', batch: 'DYN-2602', date: '05.04.2027', qty: 120 },
]
</script>

<style>
body {
  margin: 0;
  background: #f8f9fb;
}
</style>

<style scoped>
.layout {
  display: flex;
  align-items: flex-start;
  font-family: "Noto Sans", "Open Sans", sans-serif;
  color: #212529;
  font-size: 15px;
}

.ic {
  width: 1em;
  height: 1em;
  fill: currentColor;
  flex: none;
}

/* sidebar */
.sidebar {
  width: 230px;
  height: 900px;
  flex: none;
  background: linear-gradient(180deg, #042e35 0%, #1e4c54 100%);
  box-shadow: 2px 0 6px rgba(0, 0, 0, 0.05);
  color: #fff;
  overflow: hidden;
}

.brand {
  height: 78px;
  border-bottom: 1px solid #11733f;
  background: linear-gradient(115deg, #06323a 0%, #1e4a53 100%);
}

.brand-tools {
  display: flex;
  align-items: center;
  padding: 7px 0 0 71px;
  height: 30px;
}

.collapse {
  font-size: 18px;
  color: #dbe5e6;
}

.bell {
  position: relative;
  display: flex;
  margin-left: 20px;
  font-size: 17px;
}

.bell-badge {
  position: absolute;
  left: 7px;
  top: -7px;
  width: 16px;
  height: 11px;
  border-radius: 6px;
  background: #dc3545;
  font-size: 9px;
  font-weight: 700;
  line-height: 11px;
  text-align: center;
}

.theme-btn {
  display: flex;
  align-items: center;
  justify-content: center;
  margin-left: 10px;
  width: 27px;
  height: 27px;
  border: 1px solid rgba(255, 255, 255, 0.22);
  border-radius: 7px;
  background: rgba(255, 255, 255, 0.12);
  font-size: 19px;
}

.brand-name {
  display: flex;
  align-items: center;
  gap: 9px;
  margin-top: 9px;
  padding-left: 27px;
  font-size: 16px;
  font-weight: 700;
  line-height: 22px;
  letter-spacing: 0.05px;
}

.logo {
  width: 17px;
  height: 17px;
}

.user-info {
  height: 45px;
  padding: 0 4px;
  font-size: 16px;
  line-height: 24px;
  letter-spacing: -0.3px;
  color: #d8e2e3;
}

.user-info b {
  color: #fff;
}

.edit {
  margin-left: 9px;
  font-size: 18px;
  vertical-align: -3px;
}

.nav-item {
  display: flex;
  align-items: center;
  height: 56px;
  padding-left: 8px;
  font-size: 13.5px;
  font-weight: 600;
  letter-spacing: -0.12px;
  color: #eef3f3;
}

.nav-item.strong {
  font-weight: 700;
}

.nav-icon {
  width: 20px;
  height: 20px;
}

.nav-label {
  margin-left: 12px;
  flex: 1;
}

.nav-caret {
  width: 13px;
  height: 13px;
  margin: -2px 29px 0 0;
  color: #c7d4d6;
}

/* main column */
.main {
  flex: 1;
  min-width: 0;
  min-height: 1120px;
  box-sizing: border-box;
  padding: 36px 24px 19px;
  background: #f8f9fb;
}

.hero {
  display: flex;
  align-items: center;
  height: 62px;
  padding-left: 23px;
  border-radius: 16px;
  background: linear-gradient(100deg, #0b9646 0%, #bacf1f 100%);
  color: #fff;
}

.hero-icon {
  font-size: 22px;
}

.hero h1 {
  margin: 0 14px 0 8px;
  font-size: 20.5px;
  font-weight: 700;
  letter-spacing: -0.52px;
}

.hero-badge {
  padding: 0 10px;
  line-height: 27px;
  border-radius: 6px;
  background: #fff;
  color: #212529;
  font-size: 15px;
  font-weight: 700;
}

.info {
  margin-top: 14px;
  padding: 10px 20px 8px;
  border-radius: 10px;
  background: #d1ebf0;
  box-shadow: 0 1px 3px rgba(0, 0, 0, 0.06);
  color: #17505f;
  font-size: 15.5px;
  line-height: 24px;
  letter-spacing: -0.19px;
}

.info-icon {
  font-size: 16px;
  vertical-align: -2px;
  color: #0f5266;
}

.card {
  border: 1px solid #e5e8ec;
  border-radius: 14px;
  background: #fff;
  box-shadow: 0 1px 3px rgba(0, 0, 0, 0.05);
}

.filters {
  margin-top: 16px;
  overflow: hidden;
}

.filters-head {
  display: flex;
  align-items: center;
  height: 49px;
  padding: 0 16px;
  border-bottom: 1px solid #e0e3e7;
  background: #f8f9fa;
}

.funnel {
  margin-right: 9px;
  font-size: 15px;
  color: #1a7f6a;
}

.filters-title {
  flex: 1;
  font-size: 14.5px;
  font-weight: 500;
  margin-top: -1px;
}

.collapse-btn {
  display: flex;
  align-items: center;
  gap: 6px;
  height: 29px;
  padding: 0 9.5px;
  border: 1px solid #e3e6ea;
  border-radius: 6px;
  background: #f8f9fa;
  color: #495057;
  font: inherit;
  font-size: 12.5px;
  letter-spacing: -0.3px;
}

.collapse-btn .ic {
  font-size: 12px;
}

.filters-body {
  padding: 17px 16px 14px;
}

.filters-row {
  display: flex;
  align-items: flex-start;
}

.field {
  display: flex;
  flex-direction: column;
  gap: 3px;
}

.search-field {
  width: 317px;
  margin-right: 8px;
}

.days-field {
  width: 236px;
  margin-right: 8px;
}

.field-label {
  font-size: 12px;
  font-weight: 600;
  line-height: 20px;
  letter-spacing: 0.57px;
  text-transform: uppercase;
  color: #6c757d;
  white-space: nowrap;
}

.input {
  box-sizing: border-box;
  width: 100%;
  height: 36px;
  padding: 0 12px;
  border: 1px solid #e0e3e7;
  border-radius: 12px;
  outline: none;
  font: inherit;
  font-size: 14px;
  letter-spacing: -0.1px;
  color: #212529;
}

.input::placeholder {
  color: #6c757d;
}

.input.disabled {
  background: #e9ecef;
}

.check {
  display: flex;
  align-items: center;
  gap: 9px;
  margin-top: 25px;
  margin-right: 16px;
  font-size: 15px;
  letter-spacing: -0.05px;
  line-height: 24px;
  white-space: nowrap;
}

.box {
  box-sizing: border-box;
  width: 16px;
  height: 16px;
  border: 1px solid #dee2e6;
  border-radius: 4px;
  background: #fff;
}

.filters-foot {
  display: flex;
  align-items: center;
  justify-content: space-between;
  margin-top: 16px;
}

.found {
  margin-top: 2px;
  font-size: 13.5px;
  letter-spacing: -0.15px;
  color: #5c646c;
}

.foot-btns {
  display: flex;
  gap: 8px;
}

.btn {
  display: flex;
  align-items: center;
  justify-content: center;
  gap: 4px;
  height: 38px;
  box-sizing: border-box;
  border-radius: 6px;
  font: inherit;
  font-size: 15.5px;
  letter-spacing: -0.4px;
}

.btn-clear {
  width: 106px;
  border: 1px solid #6c757d;
  background: #fff;
  color: #6c757d;
}

.btn-search {
  width: 90px;
  border: 1px solid #198754;
  background: #198754;
  color: #fff;
}

.btn .ic {
  font-size: 16px;
}

/* pagers */
.pager {
  display: flex;
  align-items: center;
  justify-content: space-between;
  padding: 0 14px;
}

.pager.top {
  height: 61px;
  margin-top: 16px;
}

.pager.bottom {
  height: 51px;
  margin-top: 13px;
}

.range {
  font-size: 14px;
  letter-spacing: -0.2px;
  color: #343a40;
}

.pages {
  display: flex;
  gap: 5px;
}

.page {
  display: flex;
  align-items: center;
  justify-content: center;
  box-sizing: border-box;
  width: 32px;
  height: 32px;
  border: 1px solid #f0f1f3;
  border-radius: 8px;
  color: #c4c8cd;
  font-size: 14px;
}

.page .ic {
  font-size: 13px;
}

.page.active {
  border-color: #0b9347;
  background: #0b9347;
  box-shadow: 0 3px 8px rgba(11, 147, 71, 0.25);
  color: #fff;
  font-weight: 700;
}

.pager-right {
  display: flex;
  align-items: center;
}

.rows-label {
  margin-right: 5px;
  font-size: 13.5px;
  font-weight: 500;
  letter-spacing: -0.25px;
  color: #495057;
}

.rows-select {
  display: flex;
  align-items: center;
  justify-content: space-between;
  box-sizing: border-box;
  width: 70px;
  height: 31px;
  padding: 0 14px 0 9px;
  border: 1px solid #e3e6ea;
  border-radius: 6px;
  font-size: 14px;
}

.rows-select .ic {
  font-size: 11px;
  stroke: currentColor;
  stroke-width: 0.8;
}

.divider {
  width: 1px;
  height: 44px;
  margin: 0 10px 0 16px;
  background: #dee2e6;
}

.view-toggle {
  display: flex;
  align-items: center;
  gap: 6px;
  width: 86px;
  height: 44px;
  box-sizing: border-box;
  padding: 0 4px;
  border-radius: 22px;
  background: #e9edf3;
}

.view-btn {
  display: flex;
  align-items: center;
  justify-content: center;
  width: 36px;
  height: 36px;
  border-radius: 50%;
  color: #6b7690;
  font-size: 14px;
}

.view-btn.on {
  background: #00a651;
  box-shadow: 0 3px 10px rgba(0, 166, 81, 0.35);
  color: #fff;
}

/* table */
.table-card {
  margin-top: 12px;
  overflow: hidden;
}

table {
  width: 100%;
  table-layout: fixed;
  border-collapse: collapse;
}

th {
  height: 41px;
  padding: 0 13px 0 14px;
  border-bottom: 2px solid #e2e7ee;
  background: #f8fafc;
  text-align: left;
  font-size: 12px;
  font-weight: 700;
  letter-spacing: 0.8px;
  text-transform: uppercase;
  color: #4b5563;
  white-space: nowrap;
}

th:first-child {
  padding-left: 13px;
}

td {
  height: 50px;
  padding: 0 8px;
  border-bottom: 1px solid #e2e5e9;
  font-size: 16px;
  letter-spacing: -0.2px;
  white-space: nowrap;
}

tbody tr:last-child td {
  border-bottom: none;
}

.hovered td {
  background: #ececec;
}

th.num,
td.num {
  text-align: right;
}

.name {
  font-size: 15.5px;
  font-weight: 700;
  letter-spacing: -0.22px;
  color: #000;
}

.symbol {
  font-size: 14px;
  letter-spacing: -0.2px;
  color: #6c757d;
}

.batch {
  font-weight: 700;
  letter-spacing: 0.05px;
  color: #000;
}

.date {
  display: inline-block;
  padding: 0 7.5px;
  line-height: 19px;
  border: 1px solid #dee2e6;
  border-radius: 6px;
  background: #f8f9fa;
  font-size: 12px;
  font-weight: 700;
  letter-spacing: 0;
  color: #343a40;
}

.actions-cell {
  padding: 0 10px 0 0;
}

.actions {
  display: flex;
  justify-content: flex-end;
  gap: 4px;
}

.act {
  display: flex;
  align-items: center;
  justify-content: center;
  box-sizing: border-box;
  width: 34px;
  height: 34px;
  padding: 0;
  border: 1px solid #e2e5e9;
  border-radius: 10px;
  background: #fff;
  color: #555f6b;
}

.edit-act {
  border-color: #e7eefd;
  background: #e7eefd;
  color: #2563eb;
}

.hovered .act:not(.edit-act) {
  border-color: #fff;
}

.hovered .trash-act {
  border-color: #e6f4ea;
  background: #e6f4ea;
}

.stroke {
  width: 18px;
  height: 18px;
  fill: none;
  stroke: currentColor;
  stroke-width: 1.7;
  stroke-linejoin: round;
  stroke-linecap: round;
}

.stroke.thin {
  stroke-width: 1.35;
}

/* floating buttons */
.fab {
  position: fixed;
  right: 16px;
  display: flex;
  align-items: center;
  justify-content: center;
  width: 48px;
  height: 48px;
  padding: 0;
  border: none;
  border-radius: 50%;
  color: #fff;
  font-size: 19px;
}

.fab-green {
  top: 780px;
  background: linear-gradient(135deg, #149c47 0%, #b3cc1f 100%);
  box-shadow: 0 4px 14px rgba(60, 160, 60, 0.3);
}

.fab-green .ic {
  stroke: currentColor;
  stroke-width: 0.35;
}

.fab-blue {
  top: 836px;
  background: linear-gradient(135deg, #0d6efd 0%, #0a58ca 100%);
  box-shadow: 0 4px 14px rgba(13, 110, 253, 0.3);
  font-size: 22px;
}
</style>
